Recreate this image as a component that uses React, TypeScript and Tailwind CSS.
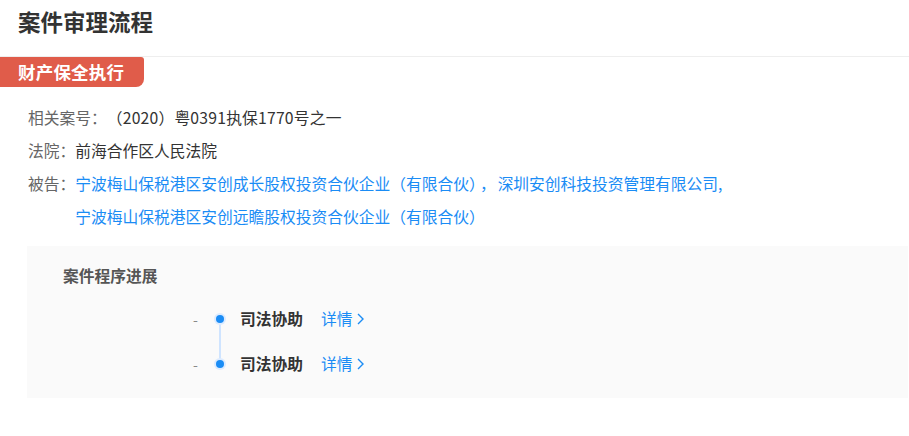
const STEPS = ["司法协助", "司法协助"];

const fontCls = "font-['Microsoft_YaHei','Noto_Sans_CJK_SC',sans-serif]";

export default function App() {
  return (
    <div className={`w-full bg-white text-[#333] ${fontCls}`}>
      {/* header */}
      <div className="h-[57px] border-b border-[#eeeeee] px-[18px] pt-[6px]">
        <h1 className="text-[22.5px] font-bold leading-[30px] text-[#333]">案件审理流程</h1>
      </div>

      {/* tag */}
      <div className="flex h-[30px] w-[144px] items-center rounded-tr-[3px] rounded-br-[8px] bg-[#e05c4a] pl-[18px] text-[17.5px] font-bold tracking-[0.2px] text-white">
        财产保全执行
      </div>

      {/* case info */}
      <div className="mt-[14px] pl-[28px] text-[15.75px] leading-[33px]">
        <div className="flex">
          <span className="text-[#666]">相关案号：</span>
          <span className="tracking-[0.2px] text-[#333]">（2020）粤0391执保1770号之一</span>
        </div>
        <div className="flex">
          <span className="text-[#666]">法院：</span>
          <span className="text-[#333]">前海合作区人民法院</span>
        </div>
        <div className="flex">
          <span className="shrink-0 text-[#666]">被告：</span>
          <div className="text-[#1a8cf5]">
            <div>
              宁波梅山保税港区安创成长股权投资合伙企业（有限合伙）
              <span className="ml-[3px] mr-[2px]">，</span>
              深圳安创科技投资管理有限公司,
            </div>
            <div>宁波梅山保税港区安创远瞻股权投资合伙企业（有限合伙）</div>
          </div>
        </div>
      </div>

      {/* progress */}
      <div className="ml-[27px] mr-[1px] mt-[13px] h-[152px] bg-[#fafafa] pl-[36px] pt-[18px]">
        <div className="text-[15.75px] font-bold leading-[24px] text-[#555]">案件程序进展</div>
        <div className="relative ml-[127px] mt-[19px] flex flex-col gap-[21px]">
          <div className="absolute left-[29px] top-[12px] h-[45px] w-[2px] bg-[#cfe4ff]" />
          {STEPS.map((s, i) => (
            <div key={i} className="flex h-[24px] items-center">
              <span className="w-[24px] pl-[3px] text-[14px] leading-none text-[#888]">-</span>
              <span className="relative z-10 flex h-[12px] w-[12px] items-center justify-center rounded-full bg-[#dcebff]">
                <span className="h-[8px] w-[8px] rounded-full bg-[#1a8cf5]" />
              </span>
              <span className="ml-[14px] text-[15.75px] font-bold text-[#333]">{s}</span>
              <span className="ml-[18px] flex items-center text-[15.75px] text-[#1a8cf5]">
                详情
                <svg width="10" height="14" viewBox="0 0 10 14" className="ml-[2px]" fill="none">
                  <path d="M3 2l5 5-5 5" stroke="#1a8cf5" strokeWidth="1.4" />
                </svg>
              </span>
            </div>
          ))}
        </div>
      </div>
      <div className="h-[38px]" />
    </div>
  );
}
